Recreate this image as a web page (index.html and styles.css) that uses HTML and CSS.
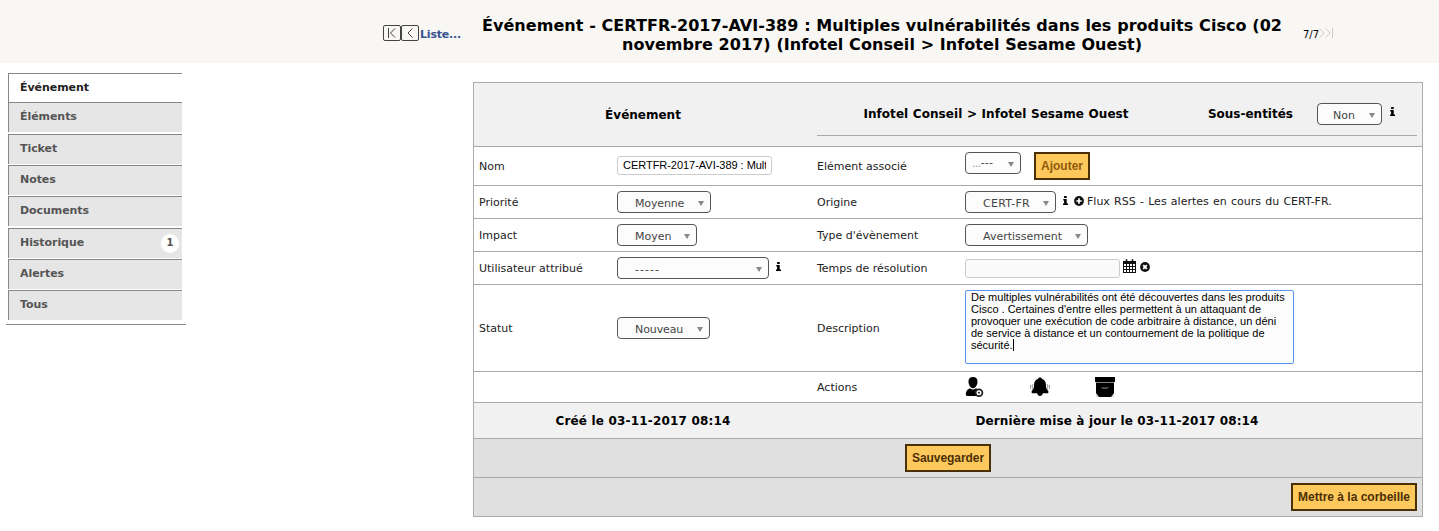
FILE: index.html
```
<!DOCTYPE html>
<html lang="fr">
<head>
<meta charset="utf-8">
<title>Événement</title>
<link rel="stylesheet" href="styles.css">
</head>
<body>
<svg class="defs" width="0" height="0">
  <symbol id="info" viewBox="0 0 5 9"><path d="M1.1 0h2.6v2H1.1zM.3 3h3.4v4.4H5V9H0V7.400h1.100V4.500H.300z"/></symbol>
</svg>
<header class="nav">
  <div class="nav-prev">
    <svg class="nav-box" viewBox="0 0 18 16"><rect x=".5" y=".5" width="17" height="15" rx="1.500"/><path d="M5.500 3v10M12 3.500L7.500 8l4.500 4.500"/></svg>
    <svg class="nav-box" viewBox="0 0 18 16"><rect x=".5" y=".5" width="17" height="15" rx="1.500"/><path d="M11.500 3.500L7 8l4.500 4.500"/></svg>
    <a class="list-link">Liste...</a>
  </div>
  <h1 class="title">Événement - CERTFR-2017-AVI-389 : Multiples vulnérabilités dans les produits Cisco (02<br>novembre 2017) (Infotel Conseil &gt; Infotel Sesame Ouest)</h1>
  <div class="nav-next">
    <span>7/7</span>
    <svg class="nav-last" viewBox="0 0 14 10"><path d="M.5.500L5 5 .5 9.500M6.500.500L11 5 6.500 9.500M13.500 0v10"/></svg>
  </div>
</header>
<div class="page">
  <nav class="tabs">
    <a class="tab active">Événement</a>
    <a class="tab gap2">Éléments</a>
    <a class="tab">Ticket</a>
    <a class="tab">Notes</a>
    <a class="tab gap2">Documents</a>
    <a class="tab">Historique<span class="count">1</span></a>
    <a class="tab">Alertes</a>
    <a class="tab">Tous</a>
  </nav>
  <main class="form">
    <div class="row head">
      <div class="heading">Événement</div>
      <div class="entity">
        <span class="entity-name">Infotel Conseil &gt; Infotel Sesame Ouest</span>
        <span class="sub-label">Sous-entités</span>
        <span class="select s-non">Non</span>
        <svg class="info"><use href="#info"/></svg>
      </div>
    </div>
    <div class="row r-name">
      <label>Nom</label><div><span class="input"><span class="clip">CERTFR-2017-AVI-389 : Mult</span></span></div>
      <label>Elément associé</label><div class="assoc"><span class="select s-mini"><span class="faded">...</span><span class="dashes">---</span></span><button class="btn add">Ajouter</button></div>
    </div>
    <div class="row r-line">
      <label>Priorité</label><div><span class="select s-prio">Moyenne</span></div>
      <label>Origine</label><div><span class="select s-orig">CERT-FR</span><svg class="info near"><use href="#info"/></svg><svg class="round" viewBox="0 0 10 10"><circle cx="5" cy="5" r="4.900"/><path d="M5 2.300v5.400M2.300 5h5.400"/></svg><span class="feed">Flux RSS - Les alertes en cours du CERT-FR.</span></div>
    </div>
    <div class="row r-line">
      <label>Impact</label><div><span class="select s-imp">Moyen</span></div>
      <label>Type d'évènement</label><div><span class="select s-type">Avertissement</span></div>
    </div>
    <div class="row r-line">
      <label>Utilisateur attribué</label><div><span class="select s-user">-----</span><svg class="info near"><use href="#info"/></svg></div>
      <label>Temps de résolution</label><div><span class="input date"></span>
        <svg class="calendar" viewBox="0 0 13 14"><path d="M0 2h13v12H0z"/><path class="cut" d="M1 5h2v2H1zm3 0h2v2H4zm3 0h2v2H7zm3 0h2v2h-2zM1 8h2v2H1zm3 0h2v2H4zm3 0h2v2H7zm3 0h2v2h-2zM1 11h2v2H1zm3 0h2v2H4zm3 0h2v2H7zm3 0h2v2h-2z"/><path class="ring" d="M3.500.300v3M9.500.300v3"/></svg>
        <svg class="round clear" viewBox="0 0 10 10"><circle cx="5" cy="5" r="4.900"/><path d="M3.200 3.200l3.600 3.600M6.800 3.200L3.200 6.800"/></svg></div>
    </div>
    <div class="row r-desc">
      <label>Statut</label><div><span class="select s-stat">Nouveau</span></div>
      <label>Description</label><div><div class="textarea">De multiples vulnérabilités ont été découvertes dans les produits<br>Cisco . Certaines d'entre elles permettent à un attaquant de<br>provoquer une exécution de code arbitraire à distance, un déni<br>de service à distance et un contournement de la politique de<br>sécurité.<span class="caret"></span></div></div>
    </div>
    <div class="row r-act">
      <label></label><div></div>
      <label>Actions</label>
      <div class="actions">
        <svg viewBox="0 0 20 20"><path d="M8 0c3 0 4.700 1.800 4.500 5-.1 2.500-1.200 4.500-2.500 5.500-1.200 1-2.800 1-4 0C4.700 9.500 3.600 7.500 3.500 5 3.300 1.800 5 0 8 0zM5 11.200c1.800 1.600 4.200 1.600 6 0l3.500 1.800V19H2.500C1.300 19 .7 18.300.8 17c.2-2.300.9-3.800 2-4.600z"/><circle class="badge" cx="14" cy="15.700" r="3.400"/><circle cx="14" cy="15.700" r=".9"/></svg>
        <svg viewBox="0 0 20 20"><path d="M10 .5c1 0 1.700.5 1.800 1.300C14.800 2.800 16 5.200 16 8c0 3 .5 4.300 2.300 6v2.300h-5.500C12.500 18 11.500 19 10 19s-2.500-1-2.800-2.700H1.700V14C3.500 12.300 4 11 4 8c0-2.800 1.200-5.200 4.200-6.200C8.300 1 9 .5 10 .5z"/><path class="wave" d="M2.300 7v5.500M.5 8v3.500M17.700 7v5.500M19.500 8v3.500"/></svg>
        <svg viewBox="0 0 20 20"><path d="M0 0h20v5H0zM1 5h18v15H1z"/><path class="clasp" d="M7 10q0 1.200 1 1.200h4q1 0 1-1.200M1 5.500h18"/><path class="corner" d="M1 16l3 4H1zM19 16l-3 4h3z"/></svg>
      </div>
    </div>
    <div class="row dates">
      <div class="created">Créé le 03-11-2017 08:14</div><div class="updated">Dernière mise à jour le 03-11-2017 08:14</div>
    </div>
    <div class="row foot"><button class="btn save">Sauvegarder</button></div>
    <div class="row foot end"><button class="btn trash">Mettre à la corbeille</button></div>
  </main>
</div>
</body>
</html>
```
FILE: styles.css
```
* { box-sizing: border-box; }
body { margin: 0; background: #fff; color: #222; font: 11px/14px "DejaVu Sans", sans-serif; overflow: hidden; }
svg { display: block; flex: none; }
.defs { position: absolute; }

.nav { display: flex; height: 63px; background: #f8f7f3; padding-left: 383px; }
.nav-prev { display: flex; width: 98px; padding-top: 25px; }
.nav-box { width: 18px; height: 16px; fill: none; stroke: #444; }
.list-link { margin: 3px 0 0 1px; color: #36528f; font-weight: bold; letter-spacing: -.2px; }
.title { width: 802px; margin: 16px 0 0; color: #000; font-size: 16px; line-height: 19px; text-align: center; letter-spacing: .05px; word-spacing: .1px; white-space: nowrap; }
.nav-next { display: flex; padding: 28px 0 0 20px; font-size: 10px; color: #000; }
.nav-last { width: 14px; height: 10px; fill: none; stroke: #ccc; }

.page { display: flex; align-items: flex-start; }
.tabs { width: 180px; margin: 10px 0 0 6px; padding: 0 4px 3px 2px; border-bottom: 1px solid #888; }
.tab { display: flex; justify-content: space-between; height: 30px; margin-bottom: 1px; padding: 7px 3px 0 11px; border: solid #888; border-width: 1px 0 0 1px; background: #e6e6e6; color: #555; font-weight: bold; letter-spacing: -.06px; }
.tab.gap2 { margin-bottom: 2px; }
.tab.active { height: 29px; margin: 0; background: #fff; color: #222; }
.count { width: 18px; height: 19px; margin-top: -2px; border-radius: 50%; background: #fff; font-size: 10px; line-height: 18px; text-align: center; }

.form { width: 950px; margin: 19px 0 0 287px; border: solid #aaa; border-width: 0 1px 1px; }
.row { display: grid; grid-template-columns: 143px 200px 148px 1fr; border-top: 1px solid #aaa; }
.row > * { display: flex; align-items: center; }
.row > label { padding: 1px 0 0 5px; }
.row > label:nth-child(3) { padding-left: 0; }
.head { height: 64px; grid-template-columns: 343px 600px; background: #f1f1f1; color: #000; font-size: 12px; font-weight: bold; }
.row > .heading { justify-content: center; padding: 1px 5px 0 0; }
.row > .entity { height: 53px; border-bottom: 1px solid #aaa; padding-top: 9px; }
.entity-name { width: 358px; text-align: center; letter-spacing: .06px; word-spacing: .3px; }
.sub-label { width: 118px; text-align: right; }
.entity .select { margin-left: 24px; }
.r-name { height: 39px; }
.r-line { height: 33px; }
.r-desc { height: 87px; }
.r-act { height: 31px; }
.row.r-act label { padding-top: 2px; }

.select { position: relative; display: flex; height: 22px; padding: 3px 0 0 17px; border: 1px solid #555; border-radius: 4px; background: #fcfcfc; color: #444; font-size: 11px; font-weight: normal; line-height: 17px; }
.select::after { content: ""; position: absolute; right: 6px; top: 9px; border: solid transparent; border-width: 5px 3.5px 0; border-top-color: #888; }
.s-non { width: 65px; padding-left: 15px; }
.s-mini { width: 56px; padding: 1px 0 0 6px; }
.faded { color: #999; letter-spacing: -.6px; padding-top: 1px; }
.dashes { letter-spacing: .2px; }
.s-prio { width: 94px; letter-spacing: -.15px; }
.s-orig { width: 91px; letter-spacing: .27px; }
.s-imp { width: 80px; }
.s-type { width: 123px; }
.s-user { width: 152px; letter-spacing: 1px; }
.s-stat { width: 93px; letter-spacing: -.1px; }
.r-line .select, .r-desc .select { margin-top: -1px; }
.r-line .select { padding-top: 3px; }
.info { width: 5px; height: 9px; margin: -4px 0 0 8px; fill: #000; }
.info.near { margin-top: -3px; margin-left: 7px; }
.round { width: 10px; height: 10px; margin: -2px 0 0 6px; fill: #111; stroke: #fff; stroke-width: 1.7; }
.round circle { stroke: none; }
.feed { margin: 0 0 0 3px; word-spacing: .75px; white-space: nowrap; }
.input { display: flex; width: 155px; height: 19px; margin-top: -1px; padding: 0 5px; border: 1px solid #ccc; border-radius: 3px; background: #fff; color: #000; font: 11px/17px "Liberation Sans", sans-serif; }
.clip { width: 144px; overflow: hidden; white-space: nowrap; letter-spacing: -.03px; }
.date { background: #fafafa; margin-top: 1px; }
.calendar { width: 13px; height: 14px; margin: -4px 0 0 3px; fill: #111; }
.calendar .cut { fill: #fff; }
.calendar .ring { stroke: #111; stroke-width: 1.600; }
.round.clear { margin: -2px 0 0 4px; stroke-width: 1.9; }
.textarea { width: 329px; height: 74px; margin-top: -2px; padding: 0 5px; border: 1px solid #5b94f0; border-radius: 2px; background: #fcfcfc; color: #000; font: 11px/12px "Liberation Sans", sans-serif; white-space: nowrap; }
.caret { display: inline-block; width: 1px; height: 12px; background: #000; vertical-align: -2px; }
.row > .assoc { align-items: flex-start; padding-top: 5px; }

.btn { height: 28px; padding: 0; border: 2px solid #4b2f05; background: #fec95c; color: #4b2f05; font: bold 12px "Liberation Sans", sans-serif; text-align: center; }
.btn.add { width: 56px; margin-left: 13px; color: #8f5a0a; }
.row .save { width: 86px; letter-spacing: -.06px; justify-content: center; }
.row .trash { width: 126px; justify-content: center; }
.actions { gap: 45px; }
.actions svg { width: 20px; height: 20px; }
.badge { fill: #fff; stroke: #222; stroke-width: 1.8; }
.wave { fill: none; stroke: #999; }
.clasp { fill: none; stroke: #aaa; stroke-width: .8; }
.corner { fill: #ddd; }
.dates { height: 36px; grid-template-columns: 343px 600px; background: #f1f1f1; color: #000; font-size: 12px; font-weight: bold; }
.row > .created { justify-content: center; padding-right: 5px; letter-spacing: .18px; }
.row > .updated { justify-content: center; letter-spacing: .13px; }
.row.foot { display: flex; justify-content: center; align-items: center; height: 39px; padding-bottom: 1px; background: #e0e0e0; }
.row.foot.end { justify-content: flex-end; padding-right: 5px; }
```
